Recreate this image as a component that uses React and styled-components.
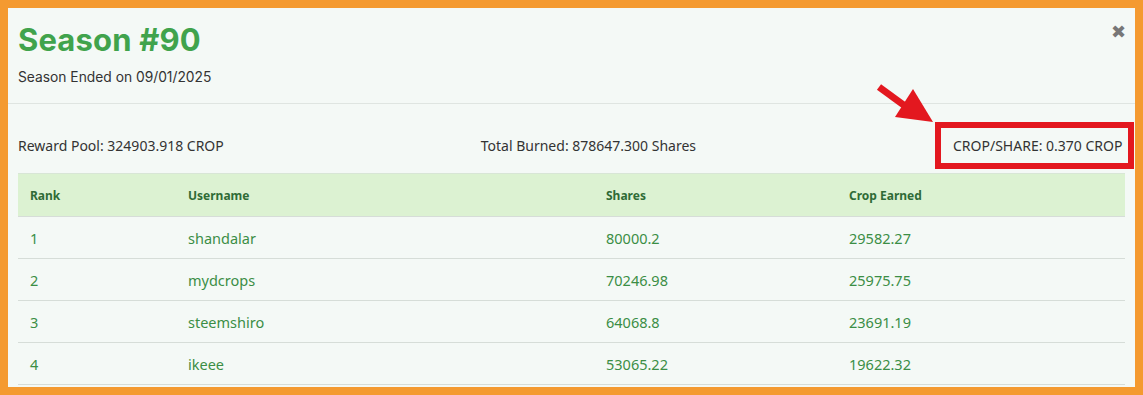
import styled, { createGlobalStyle } from "styled-components";

const GlobalStyle = createGlobalStyle`
  html, body {
    margin: 0;
    padding: 0;
    background: #f49a30;
  }
  body {
    padding: 8px 8px 8px 8px;
    box-sizing: border-box;
    height: 395px;
    overflow: hidden;
  }
`;

const rows = [
  { rank: 1, user: "shandalar", shares: "80000.2", earned: "29582.27" },
  { rank: 2, user: "mydcrops", shares: "70246.98", earned: "25975.75" },
  { rank: 3, user: "steemshiro", shares: "64068.8", earned: "23691.19" },
  { rank: 4, user: "ikeee", shares: "53065.22", earned: "19622.32" },
];

function App() {
  return (
    <>
      <GlobalStyle />
      <Panel>
        <Header>
          <Title>Season #90</Title>
          <Subtitle>Season Ended on 09/01/2025</Subtitle>
          <Close>&#x2716;</Close>
        </Header>
        <Body>
          <Stats>
            <Stat>Reward Pool: 324903.918 CROP</Stat>
            <Stat $shift={18}>Total Burned: 878647.300 Shares</Stat>
            <Highlight>
              <Arrow width="62" height="42" viewBox="0 0 62 42">
                <line x1="4" y1="3" x2="30" y2="22" stroke="#e3181f" strokeWidth="7" />
                <polygon points="20,33 38,5 58,38" fill="#e3181f" />
              </Arrow>
              CROP/SHARE: 0.370 CROP
            </Highlight>
          </Stats>
          <Table>
            <colgroup>
              <col style={{ width: "158px" }} />
              <col style={{ width: "418px" }} />
              <col style={{ width: "243px" }} />
              <col />
            </colgroup>
            <thead>
              <tr>
                <Th>Rank</Th>
                <Th>Username</Th>
                <Th>Shares</Th>
                <Th>Crop Earned</Th>
              </tr>
            </thead>
            <tbody>
              {rows.map((r) => (
                <tr key={r.rank}>
                  <Td>{r.rank}</Td>
                  <Td>{r.user}</Td>
                  <Td>{r.shares}</Td>
                  <Td>{r.earned}</Td>
                </tr>
              ))}
            </tbody>
          </Table>
        </Body>
      </Panel>
    </>
  );
}

export default App;

const Panel = styled.div`
  position: relative;
  height: 379px;
  background: #f4f9f6;
  overflow: hidden;
  font-family: Inter, "Noto Sans", sans-serif;
`;

const Header = styled.div`
  position: relative;
  padding: 13px 10px 0 10px;
  height: 82px;
  border-bottom: 1px solid #dfe5e1;
`;

const Title = styled.h1`
  margin: 0;
  font-size: 31px;
  line-height: 38px;
  font-weight: 700;
  color: #40a34c;
  letter-spacing: 0.15px;
`;

const Subtitle = styled.p`
  margin: 10px 0 0 0;
  font-size: 13.8px;
  color: #333;
`;

const Close = styled.span`
  position: absolute;
  top: 13px;
  right: 9px;
  font-size: 18px;
  color: #777;
  font-family: "DejaVu Sans", sans-serif;
`;

const Body = styled.div`
  padding: 0 10px;
`;

const Stats = styled.div`
  display: flex;
  justify-content: space-between;
  align-items: center;
  height: 69px;
  font-family: "Noto Sans", sans-serif;
`;

const Stat = styled.span`
  font-size: 14px;
  color: #333;
  margin-top: 14px;
  margin-left: ${(p) => (p.$shift ? `${p.$shift}px` : "0")};
`;

const Highlight = styled.span`
  position: relative;
  margin-right: -9px;
  box-sizing: border-box;
  width: 199px;
  height: 47px;
  border: 6px solid #e3181f;
  display: flex;
  align-items: center;
  padding-left: 12px;
  font-size: 14px;
  color: #333;
  margin-top: 13px;
  white-space: nowrap;
`;

const Arrow = styled.svg`
  position: absolute;
  left: -66px;
  top: -44px;
`;

const Table = styled.table`
  width: 100%;
  border-collapse: collapse;
  table-layout: fixed;
  font-family: "Noto Sans", sans-serif;
`;

const Th = styled.th`
  text-align: left;
  background: #dcf2d2;
  color: #2f6b36;
  font-size: 12px;
  font-weight: 700;
  height: 42px;
  padding: 0 12px;
  border-top: 1px solid #d8e6d6;
  border-bottom: 1px solid #d6ddd8;
`;

const Td = styled.td`
  color: #3b8e45;
  font-size: 14.5px;
  height: 41px;
  padding: 0 12px;
  border-bottom: 1px solid #d6ddd8;
`;
